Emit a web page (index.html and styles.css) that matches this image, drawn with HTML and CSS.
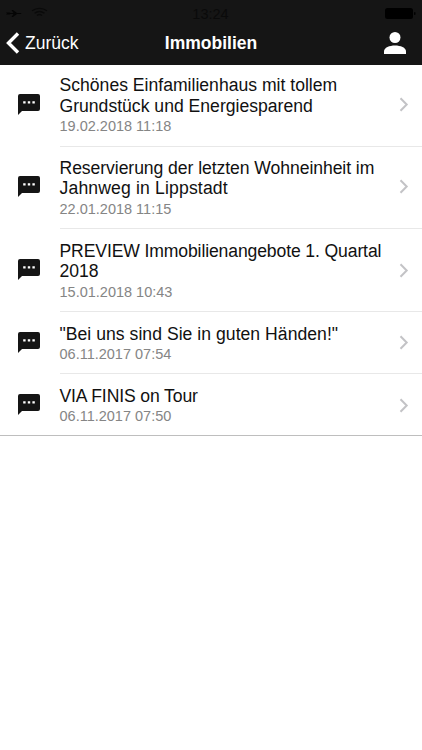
FILE: index.html
```html
<!DOCTYPE html>
<html lang="de">
<head>
<meta charset="utf-8">
<title>Immobilien</title>
<link rel="stylesheet" href="styles.css">
</head>
<body>
<svg class="defs" width="0" height="0">
<symbol id="chat" viewBox="0 0 22 21"><path d="M2 0h18a2 2 0 0 1 2 2v13a2 2 0 0 1-2 2H4l-4 4V2a2 2 0 0 1 2-2z" fill="#151515"/><path d="M5.200 7.200h2.400v2.400H5.200zM9.800 7.200h2.400v2.400H9.800zM14.400 7.200h2.400v2.400h-2.400z" fill="#fff"/></symbol>
<symbol id="next" viewBox="0 0 10 15"><path d="M1.500 1.200 7.700 7.500l-6.200 6.300" fill="none" stroke="#c3c3c6" stroke-width="2"/></symbol>
</svg>
<header class="header">
<div class="status">
<svg class="signal" width="50" height="20" viewBox="0 0 50 20"><path d="M6 12.600h3.500l1 .4h3l-2-3H13l4 3h3.500q2 .5 0 1H17l-4 3h-1.500l2-3h-3l-1 .4H6l1-.9z" fill="#050505"/><path d="M32 10.800q7.500-5 15 0M34.500 13.300q5-3.600 10 0M37 15.500q2.500-2 5 0" fill="none" stroke="#0a0a0a" stroke-width="1.300"/></svg>
<span class="time">13:24</span>
<svg class="battery" width="31" height="11" viewBox="0 0 31 11"><rect width="28" height="11" rx="2.500"/><rect x="29" y="4" width="1.500" height="3" rx=".7"/></svg>
</div>
<nav class="nav">
<a class="back"><svg width="14" height="22" viewBox="0 0 14 22"><path d="M12 1.500 2.500 11l9.500 9.500" fill="none" stroke="#fff" stroke-width="3.400"/></svg><span>Zurück</span></a>
<h1 class="title">Immobilien</h1>
<a class="profile"><svg width="22" height="22" viewBox="0 0 22 22"><circle cx="11" cy="5.500" r="5.500" fill="#fff"/><path d="M0 22v-2.500c0-8 22-8 22 0V22z" fill="#fff"/></svg></a>
</nav>
</header>
<main class="list">
<article class="row tall first"><svg class="chat"><use href="#chat"/></svg><div class="body"><div class="text"><h2>Schönes Einfamilienhaus mit tollem<br>Grundstück und Energiesparend</h2><time>19.02.2018 11:18</time></div><svg class="next"><use href="#next"/></svg></div></article>
<article class="row tall second"><svg class="chat"><use href="#chat"/></svg><div class="body"><div class="text"><h2><span class="snug">Reservierung der letzten Wohneinheit im</span><br><span class="loose">Jahnweg in Lippstadt</span></h2><time>22.01.2018 11:15</time></div><svg class="next"><use href="#next"/></svg></div></article>
<article class="row tall third"><svg class="chat"><use href="#chat"/></svg><div class="body"><div class="text"><h2><span class="tight">PREVIEW Immobilienangebote 1. Quartal</span><br>2018</h2><time>15.01.2018 10:43</time></div><svg class="next"><use href="#next"/></svg></div></article>
<article class="row"><svg class="chat"><use href="#chat"/></svg><div class="body"><div class="text"><h2><span class="wide">"Bei uns sind Sie in guten Händen!"</span></h2><time>06.11.2017 07:54</time></div><svg class="next"><use href="#next"/></svg></div></article>
<article class="row last"><svg class="chat"><use href="#chat"/></svg><div class="body"><div class="text"><h2><span class="tight">VIA FINIS on Tour</span></h2><time>06.11.2017 07:50</time></div><svg class="next"><use href="#next"/></svg></div></article>
</main>
</body>
</html>
```
FILE: styles.css
```css
* { box-sizing: border-box; }
body { margin: 0; background: #fff; color: #111; font-family: "Liberation Sans", Arial, sans-serif; }
.defs { display: block; }
.header { height: 65px; background: #151515; color: #fff; }
.status { height: 22px; padding-right: 6px; display: grid; grid-template-columns: 1fr auto 1fr; align-items: start; color: #0a0a0a; }
.signal { display: block; }
.time { margin: 6px 0 0 5px; font-size: 14.500px; line-height: 16px; }
.battery { justify-self: end; margin-top: 8px; fill: #000; }
.nav { height: 42px; display: grid; grid-template-columns: 1fr auto 1fr; align-items: center; padding: 0 16px 0 6px; }
.back { display: flex; align-items: center; gap: 5px; font-size: 17.500px; }
.title { margin: 0 0 0 10px; font-size: 17.500px; line-height: 21px; }
.profile { justify-self: end; display: flex; }
.profile svg { margin-top: -1px; }
.list { border-bottom: 1px solid #bebebe; }
.row { height: 62px; display: flex; padding-left: 17.500px; --icon: 19.500px; --text: 12px; --arrow: 22.500px; }
.row.tall { height: 82px; --icon: 29px; --text: 11px; --arrow: 31.500px; }
.row.first { --text: 10px; }
.row.third { height: 83px; --icon: 30px; --text: 12px; --arrow: 33.500px; }
.row.last { height: 61px; --icon: 20px; --arrow: 23.500px; }
.chat { width: 22px; height: 21px; margin: var(--icon) 20px 0 0; flex: none; }
.body { flex: 1; display: flex; align-items: flex-start; justify-content: space-between; border-bottom: 1px solid #e8e8e8; padding-right: 13.500px; }
.row.last .body { border-bottom: 0; }
.text { margin-top: var(--text); white-space: nowrap; }
h2 { margin: 0; font-size: 17.600px; line-height: 20.500px; font-weight: 400; }
.row:not(.tall) h2 { line-height: 20px; }
.row.tall:not(.first) h2 { line-height: 20.300px; }
.snug { letter-spacing: -0.07px; }
.tight { letter-spacing: -0.13px; }
.loose { letter-spacing: 0.15px; }
.wide { letter-spacing: 0.03px; }
time { display: block; font-size: 14.500px; line-height: 20px; color: #858585; }
.next { width: 10px; height: 15px; margin-top: var(--arrow); flex: none; }
```
